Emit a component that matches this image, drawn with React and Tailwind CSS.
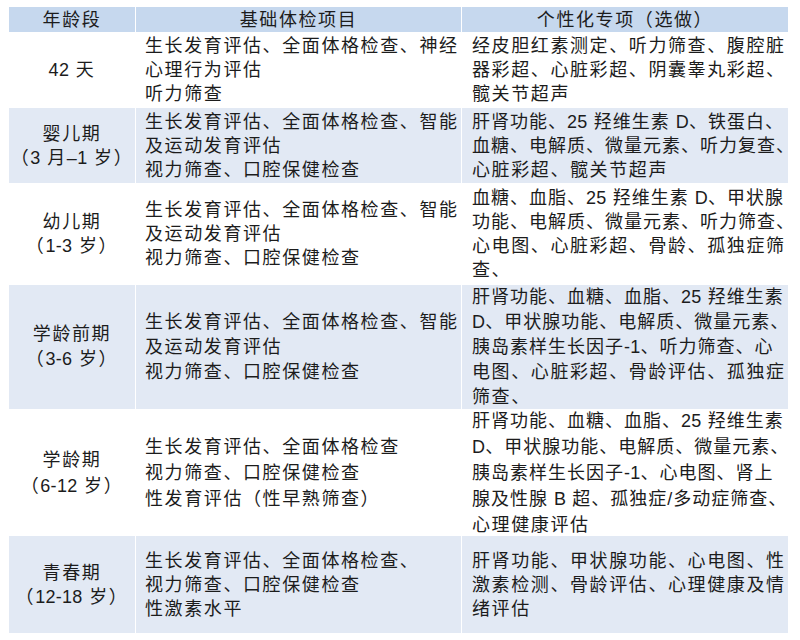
import React from "react";

const rows = [
  {
    age: ["42 天"],
    base: ["生长发育评估、全面体格检查、神经", "心理行为评估", "听力筛查"],
    extra: ["经皮胆红素测定、听力筛查、腹腔脏", "器彩超、心脏彩超、阴囊睾丸彩超、", "髋关节超声"],
    shaded: false,
    lead: "leading-[24px]",
  },
  {
    age: ["婴儿期", "（3 月–1 岁）"],
    base: ["生长发育评估、全面体格检查、智能", "及运动发育评估", "视力筛查、口腔保健检查"],
    extra: ["肝肾功能、25 羟维生素 D、铁蛋白、", "血糖、电解质、微量元素、听力复查、", "心脏彩超、髋关节超声"],
    shaded: true,
    lead: "leading-[24px]",
  },
  {
    age: ["幼儿期", "（1-3 岁）"],
    base: ["生长发育评估、全面体格检查、智能", "及运动发育评估", "视力筛查、口腔保健检查"],
    extra: [
      "血糖、血脂、25 羟维生素 D、甲状腺",
      "功能、电解质、微量元素、听力筛查、",
      "心电图、心脏彩超、骨龄、孤独症筛",
      "查、",
    ],
    shaded: false,
    lead: "leading-[24px]",
  },
  {
    age: ["学龄前期", "（3-6 岁）"],
    base: ["生长发育评估、全面体格检查、智能", "及运动发育评估", "视力筛查、口腔保健检查"],
    extra: [
      "肝肾功能、血糖、血脂、25 羟维生素",
      "D、甲状腺功能、电解质、微量元素、",
      "胰岛素样生长因子-1、听力筛查、心",
      "电图、心脏彩超、骨龄评估、孤独症",
      "筛查、",
    ],
    shaded: true,
    lead: "leading-[25px]",
  },
  {
    age: ["学龄期", "（6-12 岁）"],
    base: ["生长发育评估、全面体格检查", "视力筛查、口腔保健检查", "性发育评估（性早熟筛查）"],
    extra: [
      "肝肾功能、血糖、血脂、25 羟维生素",
      "D、甲状腺功能、电解质、微量元素、",
      "胰岛素样生长因子-1、心电图、肾上",
      "腺及性腺 B 超、孤独症/多动症筛查、",
      "心理健康评估",
    ],
    shaded: false,
    lead: "leading-[26px]",
  },
  {
    age: ["青春期", "（12-18 岁）"],
    base: ["生长发育评估、全面体格检查、", "视力筛查、口腔保健检查", "性激素水平"],
    extra: ["肝肾功能、甲状腺功能、心电图、性", "激素检测、骨龄评估、心理健康及情", "绪评估"],
    shaded: true,
    lead: "leading-[24px]",
  },
];

// latin runs keep normal spacing, CJK gets the wide tracking
const Line = ({ text }) => {
  const parts = text.split(/([A-Za-z0-9\-–/]+(?: [A-Za-z0-9\-–/]+)*)/);
  const long = [...text].length > 16;
  const body = long ? text.slice(0, -1) : text;
  const chunks = long ? body.split(/([A-Za-z0-9\-–/]+)/) : parts;
  return (
    <div className={`whitespace-nowrap ${long ? "tracking-[1px]" : ""}`}>
      {chunks.map((p, i) =>
        /[A-Za-z0-9]/.test(p) ? (
          <span key={i} className="tracking-[0.3px]">
            {p}
          </span>
        ) : (
          <React.Fragment key={i}>{p}</React.Fragment>
        )
      )}
      {long && <span className="tracking-normal [font-feature-settings:'halt']">{text.slice(-1)}</span>}
    </div>
  );
};

const Lines = ({ lines }) => lines.map((line, i) => <Line key={i} text={line} />);

const App = () => {
  return (
    <div className="min-h-[640px] w-[800px] bg-white pt-[7px] pl-[9px] font-['Liberation_Sans','Noto_Sans_CJK_SC',sans-serif] text-[18px] tracking-[1.6px] text-[#1c1c1c]">
      <div className="grid w-[779px] grid-cols-[126px_325px_326px] grid-rows-[25px_74px_75px_100px_124px_125px_97px] gap-px">
        {/* Header */}
        <div className="flex items-center justify-center bg-[#c6d8ee] leading-none">年龄段</div>
        <div className="flex items-center justify-center bg-[#c6d8ee] leading-none">基础体检项目</div>
        <div className="flex items-center justify-center bg-[#c6d8ee] leading-none">个性化专项（选做）</div>

        {/* Body rows */}
        {rows.map((row, i) => {
          const bg = row.shaded ? "bg-[#e2e9f4]" : "bg-white";
          return (
            <React.Fragment key={i}>
              <div className={`flex flex-col items-center justify-center text-center ${bg} ${row.lead}`}>
                <Lines lines={row.age} />
              </div>
              <div className={`flex flex-col justify-center pl-[9px] ${bg} ${row.lead}`}>
                <Lines lines={row.base} />
              </div>
              <div className={`flex flex-col justify-center pl-[10px] ${bg} ${row.lead}`}>
                <Lines lines={row.extra} />
              </div>
            </React.Fragment>
          );
        })}
      </div>
    </div>
  );
};

export default App;
